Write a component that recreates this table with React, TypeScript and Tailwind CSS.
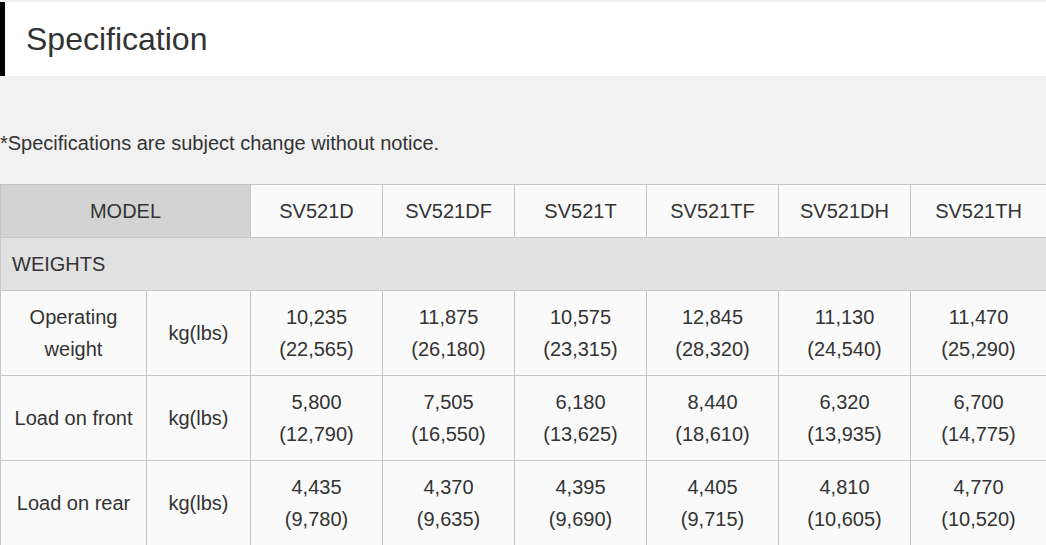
import React from 'react';

const models = ['SV521D', 'SV521DF', 'SV521T', 'SV521TF', 'SV521DH', 'SV521TH'];

const rows = [
  {
    label: ['Operating', 'weight'],
    unit: 'kg(lbs)',
    values: [
      ['10,235', '(22,565)'],
      ['11,875', '(26,180)'],
      ['10,575', '(23,315)'],
      ['12,845', '(28,320)'],
      ['11,130', '(24,540)'],
      ['11,470', '(25,290)'],
    ],
  },
  {
    label: ['Load on front'],
    unit: 'kg(lbs)',
    values: [
      ['5,800', '(12,790)'],
      ['7,505', '(16,550)'],
      ['6,180', '(13,625)'],
      ['8,440', '(18,610)'],
      ['6,320', '(13,935)'],
      ['6,700', '(14,775)'],
    ],
  },
  {
    label: ['Load on rear'],
    unit: 'kg(lbs)',
    values: [
      ['4,435', '(9,780)'],
      ['4,370', '(9,635)'],
      ['4,395', '(9,690)'],
      ['4,405', '(9,715)'],
      ['4,810', '(10,605)'],
      ['4,770', '(10,520)'],
    ],
  },
];

const cell = 'border border-[#c6c6c6] text-center align-middle';

export default function App() {
  return (
    <div className="min-h-screen bg-[#f1f1f1] pt-[2px] text-[#333] font-['Liberation_Sans',Arial,sans-serif]">
      <div className="flex h-[74px] items-center border-l-[5px] border-black bg-white pl-[21px]">
        <h1 className="text-[32px] leading-none">Specification</h1>
      </div>

      <p className="mt-[54px] text-[20px] leading-[27px]">*Specifications are subject change without notice.</p>

      <table className="mt-[27px] w-full table-fixed border-collapse text-[20px] leading-[32px]">
        <colgroup>
          <col className="w-[146px]" />
          <col className="w-[104px]" />
          <col className="w-[132px]" />
          <col className="w-[132px]" />
          <col className="w-[132px]" />
          <col className="w-[132px]" />
          <col className="w-[132px]" />
          <col className="w-[136px]" />
        </colgroup>
        <tbody>
          <tr className="h-[53px]">
            <td colSpan={2} className={`${cell} bg-[#d3d3d3]`}>MODEL</td>
            {models.map(m => (
              <td key={m} className={`${cell} bg-[#fafafa]`}>{m}</td>
            ))}
          </tr>
          <tr className="h-[53px]">
            <td colSpan={8} className="border border-[#c6c6c6] bg-[#e1e1e1] pl-[11px] text-left">WEIGHTS</td>
          </tr>
          {rows.map((row, i) => (
            <tr key={i} className="h-[85px] bg-[#fafafa]">
              <td className={cell}>
                {row.label.map(l => (
                  <div key={l}>{l}</div>
                ))}
              </td>
              <td className={cell}>{row.unit}</td>
              {row.values.map((v, j) => (
                <td key={j} className={cell}>
                  <div>{v[0]}</div>
                  <div>{v[1]}</div>
                </td>
              ))}
            </tr>
          ))}
        </tbody>
      </table>
    </div>
  );
}
